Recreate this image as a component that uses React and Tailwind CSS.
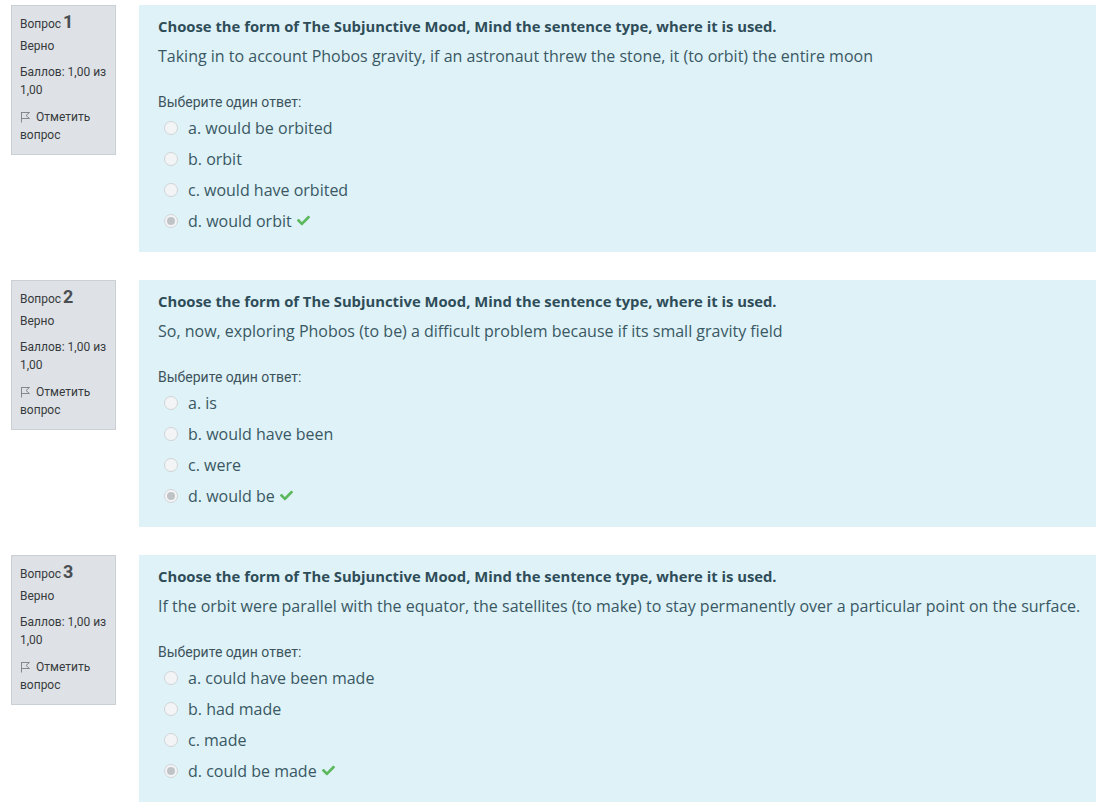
import { FaCheck } from 'react-icons/fa';

const questions = [
  {
    n: 1,
    text: 'Taking in to account Phobos gravity, if an astronaut threw the stone, it (to orbit) the entire moon',
    options: ['a. would be orbited', 'b. orbit', 'c. would have orbited', 'd. would orbit'],
  },
  {
    n: 2,
    text: 'So, now, exploring Phobos (to be) a difficult problem because if its small gravity field',
    options: ['a. is', 'b. would have been', 'c. were', 'd. would be'],
  },
  {
    n: 3,
    text: 'If the orbit were parallel with the equator, the satellites (to make) to stay permanently over a particular point on the surface.',
    options: ['a. could have been made', 'b. had made', 'c. made', 'd. could be made'],
  },
];

const body = { fontFamily: '"Open Sans", "DejaVu Sans", sans-serif' };
const side = { fontFamily: 'Roboto, "Liberation Sans", sans-serif' };

function Flag() {
  return (
    <svg width="11" height="12" viewBox="0 0 11 12" className="inline-block mr-[5px] -mt-[2px]">
      <path d="M1.5 1 L1.5 11.5 M1.5 1.5 L9.5 1.5 L6 4.5 L9.5 7.5 L1.5 7.5" fill="none" stroke="#7b7f83" strokeWidth="0.9" />
    </svg>
  );
}

function Radio({ checked }) {
  return (
    <span className="w-[14px] h-[14px] rounded-full border border-[#d0d4d7] bg-[#f3f4f5] flex items-center justify-center shrink-0">
      {checked && <span className="w-[8px] h-[8px] rounded-full bg-[#c0c3c6]" />}
    </span>
  );
}

function Question({ q }) {
  return (
    <div className="flex items-start">
      <div
        style={side}
        className="w-[105px] shrink-0 bg-[#dee2e6] border border-[#cbd0d4] px-[8px] pt-[5px] pb-[10px] text-[12px] leading-[18px] text-[#373a3c]"
      >
        <div className="flex items-baseline">
          <span>Вопрос</span>
          <span className="ml-[2px] text-[18px] font-bold leading-[22px] text-[#4a4e52]">{q.n}</span>
        </div>
        <div className="mt-[4px]">Верно</div>
        <div className="mt-[8px]">Баллов: 1,00 из 1,00</div>
        <div className="mt-[9px]">
          <Flag />
          Отметить вопрос
        </div>
      </div>
      <div className="ml-[23px] flex-1 bg-[#def2f8] h-[247px] pl-[19px] pt-[10px] text-[#3a5863]" style={body}>
        <div className="text-[14.8px] font-bold leading-[22px] text-[#2f4d58]">
          Choose the form of The Subjunctive Mood, Mind the sentence type, where it is used.
        </div>
        <div className="mt-[8px] text-[16px] leading-[22px]">{q.text}</div>
        <div style={side} className="mt-[25px] text-[14px] leading-[20px] text-[#3e545c]">
          Выберите один ответ:
        </div>
        <div className="flex flex-col">
          {q.options.map((o, i) => (
            <div key={o} className="flex items-center h-[31px] pl-[6px]">
              <Radio checked={i === 3} />
              <span className="ml-[10px] text-[16px]">{o}</span>
              {i === 3 && <FaCheck className="ml-[5px] text-[#5cb85c]" size={13} />}
            </div>
          ))}
        </div>
      </div>
    </div>
  );
}

export default function App() {
  return (
    <div className="bg-white min-h-screen pl-[11px] pt-[5px] flex flex-col gap-[28px]">
      {questions.map((q) => (
        <Question key={q.n} q={q} />
      ))}
    </div>
  );
}
